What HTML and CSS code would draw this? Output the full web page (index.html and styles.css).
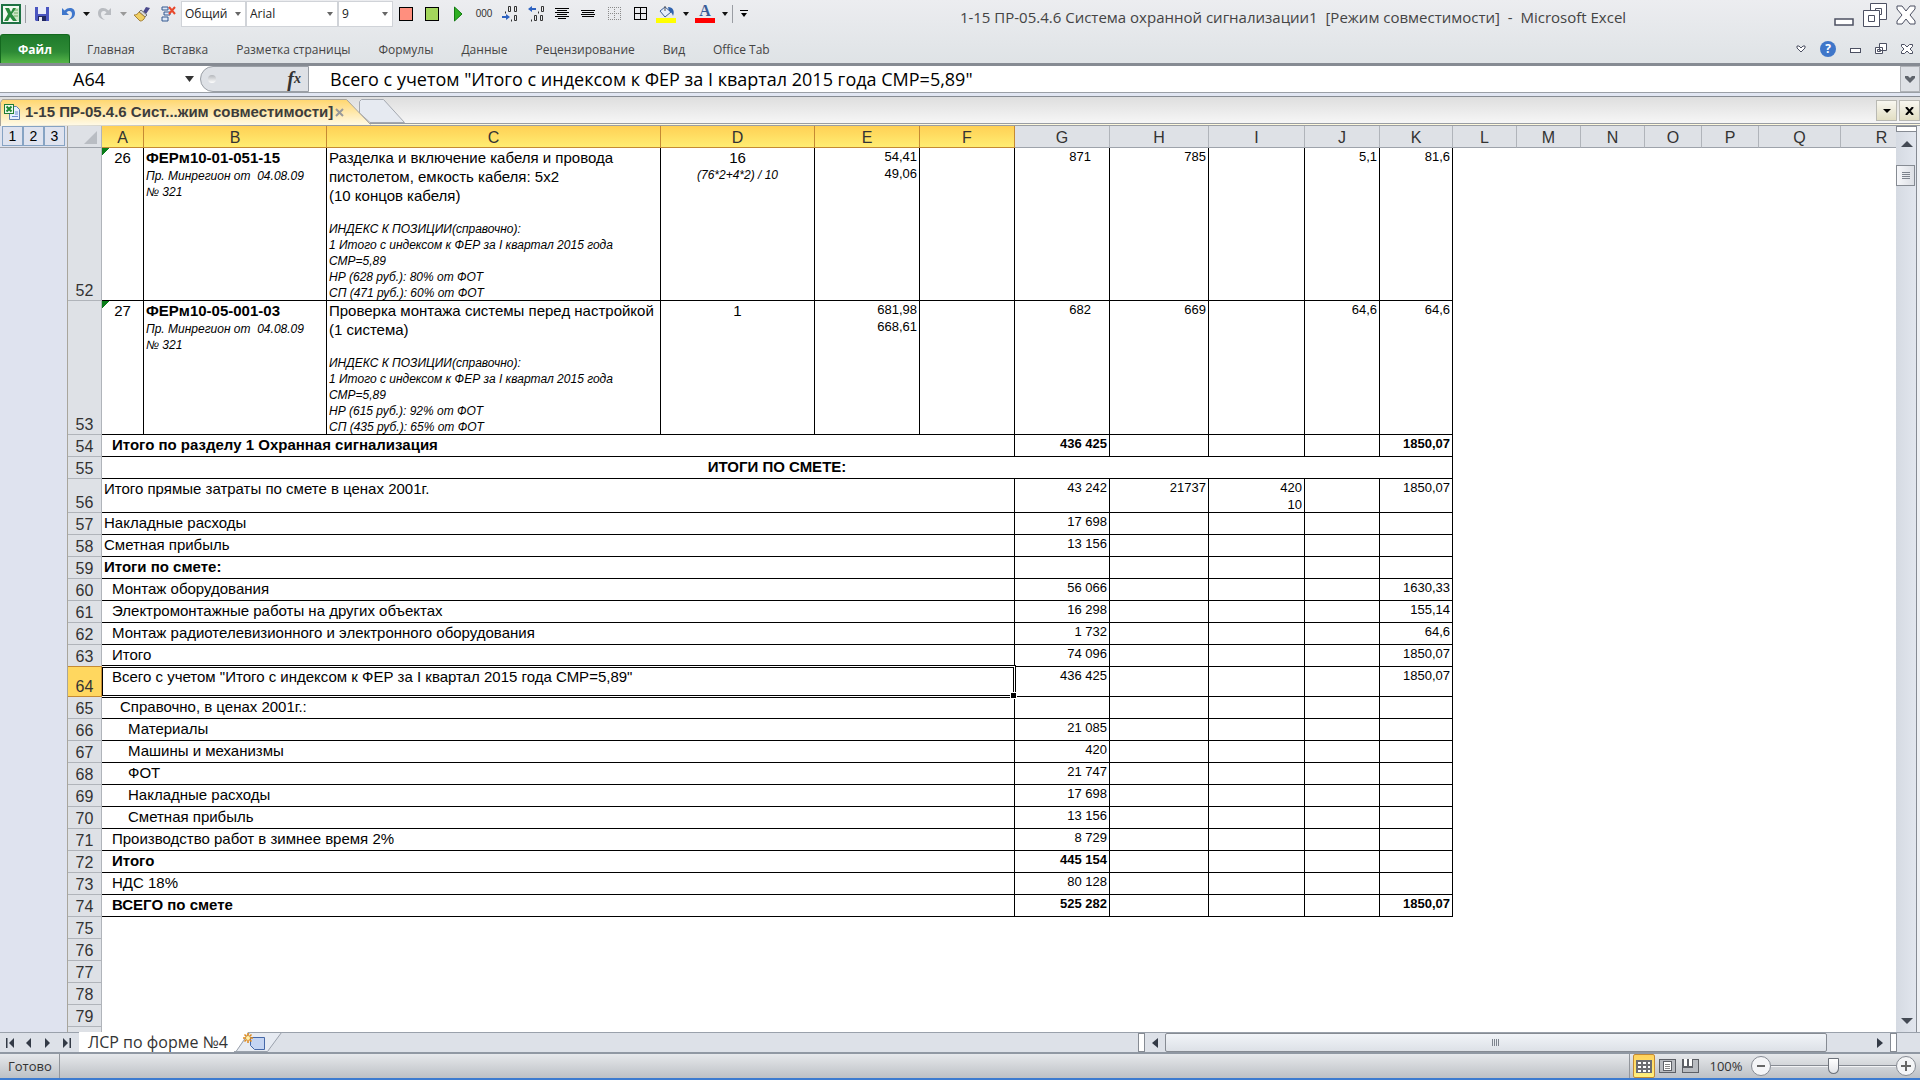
FILE: index.html
```html
<!DOCTYPE html>
<html lang="ru">
<head>
<meta charset="utf-8">
<title>1-15 ПР-05.4.6 Система охранной сигнализации1 - Microsoft Excel</title>
<link rel="stylesheet" href="styles.css">
</head>
<body>
<header class="ribbon">
  <div class="title-row">
    <div class="qat">
      <span class="app-icon"><svg width="20" height="20" viewBox="0 0 20 20"><rect x="1" y="1" width="18" height="18" fill="#f4faf3" stroke="#1f7244" stroke-width="2"/><path d="M12 4h6v13h-6z" fill="#cfe6c8"/><path d="M13 6h4M13 9h4M13 12h4" stroke="#6eae63"/><path d="M4 4h4l2 4 2-4h3l-4 6 5 7h-4l-3-4-2 4H3l4-7z" fill="#2a8a3e"/></svg></span>
      <span class="sep"></span>
      <button class="tool" aria-label="Сохранить"><svg width="16" height="16" viewBox="0 0 16 16"><path d="M1 1h14v14H2l-1-1z" fill="#4a55c0"/><rect x="4" y="1" width="8" height="7" fill="#e9ecf8"/><rect x="4" y="10" width="8" height="5" fill="#20275e"/><rect x="5" y="11" width="3" height="4" fill="#e8e8f0"/></svg></button>
      <button class="tool" aria-label="Отменить"><svg width="16" height="16" viewBox="0 0 16 16"><path d="M2 2v7h7L6.500 6.500C9 4 12 5 12 8c0 3-1.500 4.500-4 6 5-1 7-3.500 7-7 0-5-6-7-10.500-2.500z" fill="#3f77cc"/></svg></button>
      <button class="drop" aria-label="Список отмены"><svg width="7" height="4"><path d="M0 0h7L3.500 4z" fill="#111"/></svg></button>
      <button class="tool" aria-label="Вернуть"><svg width="16" height="16" viewBox="0 0 16 16"><path d="M14 2v7H7l2.500-2.500C7 4 4 5 4 8c0 3 1.500 4.500 4 6-5-1-7-3.500-7-7 0-5 6-7 10.500-2.500z" fill="#b9bcc1"/></svg></button>
      <button class="drop" aria-label="Список возврата"><svg width="7" height="4"><path d="M0 0h7L3.500 4z" fill="#999"/></svg></button>
      <button class="tool" aria-label="Формат по образцу"><svg width="17" height="16" viewBox="0 0 17 16"><path d="M12 1l4 1-4 6-3-2z" fill="#4b4a8c"/><path d="M7 4l6 5-2 2-6-5z" fill="#d8d8d8" stroke="#777"/><path d="M5 6l6 5c-1 3-3 4-5 4L0 9c2 0 4-1 5-3z" fill="#f0cf62" stroke="#a5813a"/></svg></button>
      <button class="tool" aria-label="Удалить строки"><svg width="17" height="16" viewBox="0 0 17 16"><path d="M2 1h6v3H2zM4 6h6v3H4zM2 11h6v4H2z" fill="#dce8f7" stroke="#35598f"/><path d="M9 1l6 7M15 1L9 8" stroke="#e8482c" stroke-width="2"/></svg></button>
      <label class="combo combo-format"><select aria-label="Числовой формат"><option>Общий</option></select><svg width="6" height="4"><path d="M0 0h6L3 4z" fill="#666"/></svg></label>
      <label class="combo combo-font"><select aria-label="Шрифт"><option>Arial</option></select><svg width="6" height="4"><path d="M0 0h6L3 4z" fill="#666"/></svg></label>
      <label class="combo combo-size"><select aria-label="Размер шрифта"><option>9</option></select><svg width="6" height="4"><path d="M0 0h6L3 4z" fill="#666"/></svg></label>
      <button class="tool" aria-label="Красная метка"><svg width="14" height="14"><rect x=".5" y=".5" width="13" height="13" fill="#ff8f7e" stroke="#000"/></svg></button>
      <button class="tool" aria-label="Зелёная метка"><svg width="14" height="14"><rect x=".5" y=".5" width="13" height="13" fill="#a3d65c" stroke="#000"/></svg></button>
      <button class="tool" aria-label="Выполнить"><svg width="8" height="16"><path d="M.5 1v14L8 8z" fill="#2eaf22" stroke="#127a10"/></svg></button>
      <button class="tool digits">000</button>
      <button class="tool" aria-label="Уменьшить разрядность"><svg width="17" height="18" viewBox="0 0 17 18"><g fill="none" stroke="#333"><path d="M3.500 6.500v2M6.500 1.500h2v5h-2zM12.500 1.500h2v5h-2zM9.500 14.500v2M12.500 10.500h2v5h-2z"/></g><path d="M0 11h4V9l4 3-4 3v-2H0z" fill="#2d62c0"/></svg></button>
      <button class="tool" aria-label="Увеличить разрядность"><svg width="17" height="18" viewBox="0 0 17 18"><g fill="none" stroke="#333"><path d="M10.500 6.500v2M13.500 1.500h2v5h-2zM3.500 14.500v2M6.500 10.500h2v5h-2zM12.500 10.500h2v5h-2z"/></g><path d="M8 3H4V1L0 4l4 3V5h4z" fill="#2d62c0"/></svg></button>
      <button class="tool" aria-label="По центру"><svg width="14" height="12"><path d="M0 .5h14M2 2.500h10M0 4.500h14M2 6.500h10M0 8.500h14M3 10.500h8" stroke="#000"/></svg></button>
      <button class="tool" aria-label="По середине"><svg width="14" height="8"><path d="M0 .5h14M1 2.500h12M0 4.500h14M1 6.500h12" stroke="#000"/></svg></button>
      <button class="tool" aria-label="Без границ"><svg width="13" height="13"><path d="M.5 0v13M6.500 0v13M12.500 0v13M0 .5h13M0 6.500h13M0 12.500h13" stroke="#8a8a8a" stroke-dasharray="1 1"/></svg></button>
      <button class="tool" aria-label="Все границы"><svg width="13" height="13"><path d="M.5 0v13M6.500 0v13M12.500 0v13M0 .5h13M0 6.500h13M0 12.500h13" stroke="#000"/></svg></button>
      <button class="tool" aria-label="Цвет заливки"><svg width="20" height="18" viewBox="0 0 20 18"><path d="M4 6l5-4 6 5-6 5z" fill="#e6eefb" stroke="#3d5f96"/><path d="M9 6V1" stroke="#555"/><path d="M12 2c5 0 7 4 5 9-1-3-2-4-4-5z" fill="#2f62ae"/><path d="M0 13h20v5H0z" fill="#ff0"/></svg></button>
      <button class="drop wide-drop" aria-label="Выбор заливки"><svg width="6" height="4"><path d="M0 0h6L3 4z" fill="#111"/></svg></button>
      <button class="tool fontcolor"><span>A</span></button>
      <button class="drop wide-drop" aria-label="Выбор цвета текста"><svg width="6" height="4"><path d="M0 0h6L3 4z" fill="#111"/></svg></button>
      <span class="sep"></span>
      <button class="tool more" aria-label="Настройка панели"><svg width="8" height="7"><path d="M0 .5h8" stroke="#000"/><path d="M1 3h6L4 7z"/></svg></button>
    </div>
    <h1 class="title">1-15 ПР-05.4.6 Система охранной сигнализации1&nbsp; [Режим совместимости]&nbsp; -&nbsp; Microsoft Excel</h1>
    <div class="window-buttons">
      <button aria-label="Свернуть"><svg width="20" height="26" viewBox="0 0 20 26"><rect x="1" y="17" width="18" height="6" fill="#fff" stroke="#4c5062" stroke-width="1.500"/></svg></button>
      <button aria-label="Восстановить"><svg width="26" height="26" viewBox="0 0 26 26"><g fill="#fff" stroke="#4c5062"><path d="M8.500 1.500h16v16h-16z"/><path d="M13.500 6.500h6v6h-6z"/><path d="M1.500 8.500h16v16h-16z"/><path d="M6.500 13.500h6v6h-6z"/></g></svg></button>
      <button aria-label="Закрыть"><svg width="20" height="20" viewBox="0 0 20 20"><path d="M1 1h5l4 5 4-5h5v3l-5 6 5 6v3h-5l-4-5-4 5H1v-3l5-6-5-6z" fill="#fff" stroke="#4c5062"/></svg></button>
    </div>
  </div>
  <nav class="tabs">
    <button class="file">Файл</button>
    <a href="#home">Главная</a><a href="#insert">Вставка</a><a href="#layout">Разметка страницы</a><a href="#formulas">Формулы</a><a href="#data">Данные</a><a href="#review">Рецензирование</a><a href="#view">Вид</a><a href="#officetab">Office Tab</a>
    <div class="book-buttons">
      <button aria-label="Свернуть ленту"><svg width="10" height="8" viewBox="0 0 10 8"><path d="M1 1h2l2 2 2-2h2v2L5 7 1 3z" fill="#fff" stroke="#4c5062"/></svg></button>
      <button class="help">?</button>
      <button aria-label="Свернуть книгу"><svg width="11" height="10"><rect x=".5" y="4.500" width="10" height="4" fill="#fff" stroke="#4c5062"/></svg></button>
      <button aria-label="Восстановить книгу"><svg width="12" height="12"><g fill="#fff" stroke="#4c5062"><path d="M4.500.5h7v7h-7zM.5 4.500h7v6h-7zM2.500 6.500h3v2h-3z"/></g></svg></button>
      <button aria-label="Закрыть книгу"><svg width="12" height="10" viewBox="0 0 12 10"><path d="M.5.5h3L6 3 8.500.5h3v2L9 5l2.500 2.500v2h-3L6 7 3.500 9.500h-3v-2L3 5 .5 2.500z" fill="#fff" stroke="#4c5062"/></svg></button>
    </div>
  </nav>
</header>

<div class="formula-bar">
  <input class="name-box" aria-label="Имя ячейки" value="A64">
  <button class="name-drop" aria-label="Список имён"><svg width="9" height="6"><path d="M0 0h9L4.500 6z" fill="#333"/></svg></button>
  <div class="fx"><i class="knob"></i><button class="fx-button"><b>f</b><span>x</span></button></div>
  <input class="formula" aria-label="Строка формул" value="Всего с учетом &quot;Итого с индексом к ФЕР за I квартал 2015 года СМР=5,89&quot;">
  <button class="expand" aria-label="Развернуть строку формул"><svg width="10" height="7"><path d="M0 0h3l2 2 2-2h3v2L5 7 0 2z" fill="#5f646c"/></svg></button>
</div>

<div class="doc-tabs">
  <div class="doc-tab">
    <svg class="doc-shape" width="372" height="27" viewBox="0 0 372 27"><defs><linearGradient id="tabfill" x1="0" y1="0" x2="0" y2="1"><stop offset="0" stop-color="#ffd66e"/><stop offset="1" stop-color="#fffbea"/></linearGradient></defs><path d="M.5 27V3.500l2-3H346.500L370.500 25.500" fill="url(#tabfill)" stroke="#a9a59b"/></svg>
    <svg class="doc-icon" width="16" height="16" viewBox="0 0 16 16"><path d="M5.500 2.500h7l3 3v10h-10z" fill="#e6efff" stroke="#5f7fb0"/><path d="M11 8h3M11 10h3M8 12.500h6" stroke="#6c8ed0"/><rect x=".5" y=".5" width="9" height="9" fill="#eef8ec" stroke="#1f7a35"/><path d="M2.500 2.500l5 5M7.500 2.500l-5 5" stroke="#1f8a35" stroke-width="2"/></svg>
    <span class="doc-name">1-15 ПР-05.4.6 Сист...жим совместимости]</span>
    <button class="doc-close" aria-label="Закрыть вкладку"><svg width="9" height="9"><path d="M1 1l7 7M8 1L1 8" stroke="#999" stroke-width="2"/></svg></button>
  </div>
  <button class="doc-new" aria-label="Новая вкладка"><svg width="46" height="24"><path d="M.5 14V2.500l2-2H24.500L45.500 23.500H11z" fill="#e6eaf1" stroke="#a4a8b0"/></svg></button>
  <div class="doc-buttons">
    <button aria-label="Список вкладок"><svg width="8" height="4"><path d="M0 0h8L4 4z"/></svg></button>
    <button aria-label="Закрыть"><svg width="9" height="8"><path d="M1 0l7 8M8 0L1 8" stroke="#000" stroke-width="2"/></svg></button>
  </div>
</div>

<main class="workspace">
  <aside class="outline">
    <div class="levels"><button>1</button><button>2</button><button>3</button></div>
  </aside>
  <div class="sheet">
    <table>
      <colgroup><col class="c-row"><col class="c-a"><col class="c-b"><col class="c-c"><col class="c-d"><col class="c-e"><col class="c-f"><col class="c-f"><col class="c-h"><col class="c-i"><col class="c-j"><col class="c-k"><col class="c-l"><col class="c-l"><col class="c-l"><col class="c-o"><col class="c-o"><col class="c-q"><col class="c-q"></colgroup>
      <thead><tr><th class="corner"><svg width="13" height="13"><path d="M13 0v13H0z" fill="#b9bdc3"/></svg></th><th class="on">A</th><th class="on">B</th><th class="on">C</th><th class="on">D</th><th class="on">E</th><th class="on">F</th><th>G</th><th>H</th><th>I</th><th>J</th><th>K</th><th>L</th><th>M</th><th>N</th><th>O</th><th>P</th><th>Q</th><th>R</th></tr></thead>
      <tbody>
        <tr class="pos"><th>52</th><td class="mid flag">26</td><td><b>ФЕРм10-01-051-15</b><p class="note law">Пр. Минрегион от&nbsp; 04.08.09<br>№ 321</p></td><td>Разделка и включение кабеля и провода<br>пистолетом, емкость кабеля: 5х2<br>(10 концов кабеля)<p class="note index">ИНДЕКС К ПОЗИЦИИ(справочно):<br>1 Итого с индексом к ФЕР за I квартал 2015 года<br>СМР=5,89<br>НР (628 руб.): 80% от ФОТ<br>СП (471 руб.): 60% от ФОТ</p></td><td class="mid">16<p class="note">(76*2+4*2) / 10</p></td><td class="num">54,41<br>49,06</td><td></td><td class="num wide">871</td><td class="num">785</td><td></td><td class="num">5,1</td><td class="num">81,6</td></tr>
        <tr class="pos"><th>53</th><td class="mid flag">27</td><td><b>ФЕРм10-05-001-03</b><p class="note law">Пр. Минрегион от&nbsp; 04.08.09<br>№ 321</p></td><td>Проверка монтажа системы перед настройкой<br>(1 система)<p class="note index">ИНДЕКС К ПОЗИЦИИ(справочно):<br>1 Итого с индексом к ФЕР за I квартал 2015 года<br>СМР=5,89<br>НР (615 руб.): 92% от ФОТ<br>СП (435 руб.): 65% от ФОТ</p></td><td class="mid">1</td><td class="num">681,98<br>668,61</td><td></td><td class="num wide">682</td><td class="num">669</td><td></td><td class="num">64,6</td><td class="num">64,6</td></tr>
        <tr class="bold"><th>54</th><td colspan="6" class="in1">Итого по разделу 1 Охранная сигнализация</td><td class="num">436 425</td><td></td><td></td><td></td><td class="num">1850,07</td></tr>
        <tr class="bold"><th>55</th><td colspan="11" class="mid">ИТОГИ ПО СМЕТЕ:</td></tr>
        <tr class="double"><th>56</th><td colspan="6">Итого прямые затраты по смете в ценах 2001г.</td><td class="num">43 242</td><td class="num">21737</td><td class="num"><p class="pair">420<br>10</p></td><td></td><td class="num">1850,07</td></tr>
        <tr><th>57</th><td colspan="6">Накладные расходы</td><td class="num">17 698</td><td></td><td></td><td></td><td></td></tr>
        <tr><th>58</th><td colspan="6">Сметная прибыль</td><td class="num">13 156</td><td></td><td></td><td></td><td></td></tr>
        <tr class="bold"><th>59</th><td colspan="6">Итоги по смете:</td><td></td><td></td><td></td><td></td><td></td></tr>
        <tr><th>60</th><td colspan="6" class="in1">Монтаж оборудования</td><td class="num">56 066</td><td></td><td></td><td></td><td class="num">1630,33</td></tr>
        <tr><th>61</th><td colspan="6" class="in1">Электромонтажные работы на других объектах</td><td class="num">16 298</td><td></td><td></td><td></td><td class="num">155,14</td></tr>
        <tr><th>62</th><td colspan="6" class="in1">Монтаж радиотелевизионного и электронного оборудования</td><td class="num">1 732</td><td></td><td></td><td></td><td class="num">64,6</td></tr>
        <tr><th>63</th><td colspan="6" class="in1">Итого</td><td class="num">74 096</td><td></td><td></td><td></td><td class="num">1850,07</td></tr>
        <tr class="current"><th class="on">64</th><td colspan="6" class="in1 selected">Всего с учетом "Итого с индексом к ФЕР за I квартал 2015 года СМР=5,89"</td><td class="num">436 425</td><td></td><td></td><td></td><td class="num">1850,07</td></tr>
        <tr><th>65</th><td colspan="6" class="in2">Справочно, в ценах 2001г.:</td><td></td><td></td><td></td><td></td><td></td></tr>
        <tr><th>66</th><td colspan="6" class="in3">Материалы</td><td class="num">21 085</td><td></td><td></td><td></td><td></td></tr>
        <tr><th>67</th><td colspan="6" class="in3">Машины и механизмы</td><td class="num">420</td><td></td><td></td><td></td><td></td></tr>
        <tr><th>68</th><td colspan="6" class="in3">ФОТ</td><td class="num">21 747</td><td></td><td></td><td></td><td></td></tr>
        <tr><th>69</th><td colspan="6" class="in3">Накладные расходы</td><td class="num">17 698</td><td></td><td></td><td></td><td></td></tr>
        <tr><th>70</th><td colspan="6" class="in3">Сметная прибыль</td><td class="num">13 156</td><td></td><td></td><td></td><td></td></tr>
        <tr><th>71</th><td colspan="6" class="in1">Производство работ в зимнее время 2%</td><td class="num">8 729</td><td></td><td></td><td></td><td></td></tr>
        <tr class="bold"><th>72</th><td colspan="6" class="in1">Итого</td><td class="num">445 154</td><td></td><td></td><td></td><td></td></tr>
        <tr><th>73</th><td colspan="6" class="in1">НДС 18%</td><td class="num">80 128</td><td></td><td></td><td></td><td></td></tr>
        <tr class="bold"><th>74</th><td colspan="6" class="in1">ВСЕГО по смете</td><td class="num">525 282</td><td></td><td></td><td></td><td class="num">1850,07</td></tr>
        <tr><th>75</th></tr><tr><th>76</th></tr><tr><th>77</th></tr><tr><th>78</th></tr><tr><th>79</th></tr><tr><th></th></tr>
      </tbody>
    </table>
  </div>
  <div class="vscroll">
    <i class="split"></i>
    <button aria-label="Вверх"><svg width="12" height="6"><path d="M6 0l6 6H0z" fill="#444a54"/></svg></button>
    <div class="vtrack"><div class="vthumb"><svg width="8" height="8"><path d="M0 .5h8M0 2.500h8M0 4.500h8M0 6.500h8" stroke="#7d838d"/></svg></div></div>
    <button aria-label="Вниз"><svg width="12" height="6"><path d="M0 0h12L6 6z" fill="#444a54"/></svg></button>
  </div>
</main>

<div class="sheet-bar">
  <div class="sheet-nav">
    <button aria-label="Первый лист"><svg width="8" height="10"><path d="M.5 0v10" stroke="#333a46" stroke-width="2"/><path d="M8 0v10L3 5z" fill="#333a46"/></svg></button>
    <button aria-label="Предыдущий лист"><svg width="5" height="10"><path d="M5 0v10L0 5z" fill="#333a46"/></svg></button>
    <button aria-label="Следующий лист"><svg width="5" height="10"><path d="M0 0v10l5-5z" fill="#333a46"/></svg></button>
    <button aria-label="Последний лист"><svg width="8" height="10"><path d="M7.500 0v10" stroke="#333a46" stroke-width="2"/><path d="M0 0v10l5-5z" fill="#333a46"/></svg></button>
  </div>
  <button class="sheet-tab">ЛСР по форме №4</button>
  <button class="sheet-new" aria-label="Новый лист"><svg width="48" height="20" viewBox="0 0 48 20"><path d="M0 0h14L2 19.500H0z" fill="#fff"/><path d="M0 19.500h2l12-17 2-2h31.500l-14 19z" fill="#e7ebf2" stroke="#9aa1ab"/><path d="M16.500 5.500h14v12h-10l-4-4z" fill="#c4d4f2" stroke="#4668a8"/><path d="M14 1v10M9 6h10M10.500 2.500l7 7M17.500 2.500l-7 7" stroke="#e08a1c" stroke-width="1.500"/><circle cx="14" cy="6" r="2" fill="#fff3b0"/></svg></button>
  <div class="hscroll">
    <i class="hsplit"></i>
    <button aria-label="Влево"><svg width="6" height="10"><path d="M6 0v10L0 5z" fill="#333a46"/></svg></button>
    <div class="htrack"><div class="hthumb"><svg width="8" height="7"><path d="M.5 0v7M2.500 0v7M4.500 0v7M6.500 0v7" stroke="#7d838d"/></svg></div></div>
    <button aria-label="Вправо"><svg width="6" height="10"><path d="M0 0v10l6-5z" fill="#333a46"/></svg></button>
    <i class="hsplit"></i>
  </div>
</div>

<footer class="status">
  <span class="ready">Готово</span>
  <div class="views">
    <button class="view on" aria-label="Обычный"><svg width="16" height="13"><rect width="16" height="13" fill="#6b6c70"/><path d="M2 2h3v2H2zM7 2h3v2H7zM12 2h2v2h-2zM2 6h3v2H2zM7 6h3v2H7zM12 6h2v2h-2zM2 10h3v2H2zM7 10h3v2H7zM12 10h2v2h-2z" fill="#fff"/></svg></button>
    <button class="view" aria-label="Разметка страницы"><svg width="17" height="14"><rect x=".5" y=".5" width="16" height="13" fill="#b9bcc1" stroke="#5d6066"/><rect x="4.500" y="2.500" width="8" height="9" fill="#fff" stroke="#5d6066"/><path d="M6 5.500h5M6 7.500h5M6 9.500h5" stroke="#888"/></svg></button>
    <button class="view" aria-label="Страничный режим"><svg width="17" height="14"><rect x=".5" y=".5" width="16" height="13" fill="#b9bcc1" stroke="#5d6066"/><path d="M1 0h10v9H1z" fill="#5d6066"/><path d="M2 0h3v7H2zM7 0h3v7H7z" fill="#fff"/></svg></button>
  </div>
  <button class="percent">100%</button>
  <button class="round" aria-label="Уменьшить"><svg width="20" height="20"><circle cx="10" cy="10" r="9.500" fill="#f4f5f7" stroke="#868b93"/><path d="M6 10h8" stroke="#666" stroke-width="2"/></svg></button>
  <input class="zoom" type="range" min="0" max="100" value="50" aria-label="Масштаб">
  <button class="round" aria-label="Увеличить"><svg width="20" height="20"><circle cx="10" cy="10" r="9.500" fill="#f4f5f7" stroke="#868b93"/><path d="M5 10h10M10 5v10" stroke="#666" stroke-width="2"/></svg></button>
</footer>
</body>
</html>
```
FILE: styles.css
```css
* { box-sizing: border-box; }

body {
  margin: 0;
  height: 100vh;
  display: flex;
  flex-direction: column;
  overflow: hidden;
  background: #fff;
  color: #000;
  font-family: "Open Sans", "Noto Sans", sans-serif;
  font-size: 12px;
}

button {
  display: flex;
  align-items: center;
  justify-content: center;
  margin: 0;
  padding: 0;
  border: 0;
  background: none;
  color: inherit;
  font: inherit;
}

svg { display: block; flex: none; }
p { margin: 0; }

/* Ribbon */
.ribbon {
  flex: none;
  background: linear-gradient(#ecedf0, #dfe3e6);
  border-bottom: 3px solid #868b93;
}
.title-row { display: flex; height: 34px; }
.qat { display: flex; align-items: center; height: 27px; }
.app-icon { width: 24px; padding-left: 1px; }
.sep { width: 1px; height: 18px; margin: 0 3px 0 1px; background: #9a9da3; }
.tool { width: 26px; height: 24px; }
.drop { width: 11px; height: 24px; }
.wide-drop { width: 13px; }
.digits { color: #333; font-family: "Liberation Sans", sans-serif; font-size: 10px; }
.more { width: 16px; }
.fontcolor span {
  width: 20px;
  border-bottom: 5px solid #f00;
  color: #3a5c98;
  font: bold 16px/14px "Liberation Serif", serif;
  text-align: center;
}
.combo {
  display: flex;
  align-items: center;
  height: 26px;
  border: 1px solid #d0d3d8;
  background: #fff;
  padding-right: 4px;
}
.combo select {
  flex: 1;
  min-width: 0;
  appearance: none;
  border: 0;
  padding: 0 0 0 3px;
  background: none;
  color: #222;
  font: 12px/20px "Open Sans", "Noto Sans", sans-serif;
}
.combo-format { width: 65px; }
.combo-font { width: 92px; }
.combo-size { width: 55px; }
.title {
  flex: 1;
  margin: 0;
  color: #444;
  font-size: 15px;
  font-weight: 400;
  line-height: 34px;
  text-align: center;
  white-space: nowrap;
}
.window-buttons { display: flex; align-items: center; gap: 8px; height: 30px; padding-right: 4px; }

.tabs { display: flex; align-items: stretch; height: 29px; color: #444; }
.file {
  width: 70px;
  margin-right: 3px;
  border: 1px solid #14691f;
  border-bottom: 0;
  border-radius: 3px 3px 0 0;
  background: linear-gradient(#1f7a2b, #2d8a35 60%, #55b548);
  color: #fff;
  font-weight: 700;
}
.tabs a { padding: 0 14px; color: inherit; line-height: 32px; text-decoration: none; }
.book-buttons { display: flex; align-items: center; gap: 14px; margin-left: auto; padding-right: 7px; }
.help {
  width: 16px;
  height: 16px;
  border-radius: 8px;
  background: #3f76c9;
  color: #fff;
  font-weight: 700;
}

/* Formula bar */
.formula-bar {
  display: flex;
  flex: none;
  height: 31px;
  border-bottom: 1px solid #868b93;
  background: linear-gradient(#fff 26px, #9a9fa6 26px, #9a9fa6 27px, #e1e6f2 27px);
  padding-bottom: 4px;
}
.name-box, .formula {
  min-width: 0;
  border: 0;
  padding: 0;
  background: transparent;
  color: #000;
  font: 18px/26px "Open Sans", "Noto Sans", sans-serif;
}
.name-box { width: 178px; text-align: center; }
.name-drop { width: 22px; }
.fx {
  display: flex;
  align-items: center;
  justify-content: space-between;
  width: 109px;
  padding: 0 7px;
  border: 1px solid #9a9fa6;
  border-radius: 13px 0 0 13px;
  background: #dee1e6;
}
.knob { width: 8px; height: 8px; border-radius: 4px; background: linear-gradient(#b4b7bc, #fff); }
.fx-button { font: italic 20px/24px "Liberation Serif", serif; color: #333; }
.fx-button span { font-size: 14px; font-weight: 700; }
.formula { flex: 1; padding-left: 21px; }
.expand { width: 20px; border: 1px solid #b0b3b8; background: #dee1e6; }

/* Document tabs */
.doc-tabs {
  display: flex;
  flex: none;
  height: 29px;
  padding-top: 2px;
  background: linear-gradient(#dedede, #f6f6f6 26px, #999da3 26px, #999da3 27px, #fdf8dc 27px, #fdf8dc 28px, #999da3 28px);
}
.doc-tab { position: relative; display: flex; align-items: center; width: 359px; height: 26px; padding-left: 4px; }
.doc-shape { position: absolute; left: 0; top: 0; }
.doc-icon, .doc-name, .doc-close { position: relative; }
.doc-name { margin: 0 2px 0 5px; color: #3c3c3c; font: bold 15px/24px "Liberation Sans", sans-serif; }
.doc-new { height: 24px; }
.doc-buttons { display: flex; gap: 2px; height: 21px; margin: 1px 0 0 auto; }
.doc-buttons button { width: 21px; border: 1px solid #b9b9b3; background: linear-gradient(#f8f7f0, #e2dec3); }

/* Worksheet */
.workspace { display: flex; flex: 1; min-height: 0; }
.outline { flex: none; width: 68px; border-right: 1px solid #a8a59c; background: #dfe3ef; }
.levels { display: flex; height: 22px; padding: 0 2px 1px; border-bottom: 1px solid #a0a4ab; }
.levels button { width: 21px; border: 1px solid #86a3c3; font: 14px/20px "Liberation Sans", sans-serif; }
.sheet { flex: 1; min-width: 0; overflow: hidden; }

table {
  width: 0;
  table-layout: fixed;
  border-collapse: separate;
  border-spacing: 0;
  font: 15px/19px "Liberation Sans", Arial, sans-serif;
}
.c-row { width: 34px; }
.c-a { width: 42px; }
.c-b { width: 183px; }
.c-c { width: 334px; }
.c-d { width: 154px; }
.c-e { width: 105px; }
.c-f { width: 95px; }
.c-h { width: 99px; }
.c-i { width: 96px; }
.c-j { width: 75px; }
.c-k { width: 73px; }
.c-l { width: 64px; }
.c-o { width: 57px; }
.c-q { width: 82px; }

th {
  height: 22px;
  padding: 0;
  border-right: 1px solid #b0b4ba;
  border-bottom: 1px solid #b0b4ba;
  background: #dee1e6;
  color: #333;
  font-size: 16px;
  font-weight: 400;
  line-height: 18px;
  vertical-align: bottom;
}
thead th { border-bottom-color: #9ea3ab; }
th.on { background: linear-gradient(#ffd055, #ffed72); border-color: #c58a33; }
tbody th.on { background: #ffd75f; box-shadow: 0 -1px #c58a33; }
.corner svg { margin: 0 4px 3px auto; }

td {
  padding: 0 2px;
  border-right: 1px solid #000;
  border-bottom: 1px solid #000;
  vertical-align: top;
  white-space: nowrap;
}
.pos th { height: 134px; }
.double th { height: 34px; }
.current th { height: 30px; }
.bold td { font-weight: 700; }
.mid { text-align: center; }
.num { font-size: 13px; line-height: 17px; text-align: right; }
.num.wide { padding-right: 18px; }
.in1 { padding-left: 10px; }
.in2 { padding-left: 18px; }
.in3 { padding-left: 26px; }
.pair { margin-bottom: -1px; }
.note { font-size: 12px; font-style: italic; line-height: 16px; }
.law { margin-top: 1px; }
.index { margin: 16px 0 -1px; }
.flag { background: linear-gradient(135deg, #0a7d1a 5px, transparent 5px); }

.selected { position: relative; }
.selected::before {
  content: "";
  position: absolute;
  inset: 0;
  border: 1px solid #000;
  box-shadow: 0 0 0 1px #fff, 0 0 0 2px #000;
  clip-path: inset(-2px -2px -2px 0);
}
.selected::after {
  content: "";
  position: absolute;
  right: -3px;
  bottom: -3px;
  width: 5px;
  height: 5px;
  border: 1px solid #fff;
  background: #000;
}

/* Vertical scroll bar */
.vscroll {
  display: flex;
  flex: none;
  flex-direction: column;
  width: 24px;
  padding-right: 3px;
  background: linear-gradient(90deg, #d5dae2, #e2e6ee 20px, #868b93 20px, #868b93 21px, #eef0f4 21px);
}
.split { height: 6px; border: 1px solid #868b93; background: #fff; }
.vscroll button { height: 23px; }
.vtrack { flex: 1; padding-top: 10px; }
.vthumb {
  display: flex;
  align-items: center;
  justify-content: center;
  width: 19px;
  height: 21px;
  border: 1px solid #868b93;
  background: linear-gradient(90deg, #f6f7fa, #dcdfe5);
}

/* Sheet tabs and horizontal scroll bar */
.sheet-bar {
  display: flex;
  flex: none;
  height: 22px;
  border-top: 1px solid #9aa1ab;
  border-bottom: 2px solid #9098a3;
  background: #dde1e8;
}
.sheet-nav { display: flex; width: 79px; }
.sheet-nav button { width: 19px; }
.sheet-tab { padding: 0 6px 0 9px; margin-top: -1px; background: #fff; color: #333; font-size: 16px; line-height: 20px; }
.sheet-new { margin-top: -1px; }
.hscroll { display: flex; width: 759px; margin: 0 23px 0 auto; }
.hsplit { width: 7px; border: 1px solid #868b93; background: #fff; }
.hscroll button { width: 20px; }
.htrack { flex: 1; padding-right: 43px; }
.hthumb {
  display: flex;
  align-items: center;
  justify-content: center;
  height: 19px;
  border: 1px solid #868b93;
  border-radius: 2px;
  background: linear-gradient(#f1f4f8, #dde1e7);
}

/* Status bar */
.status {
  display: flex;
  align-items: center;
  flex: none;
  height: 26px;
  padding-right: 4px;
  border-bottom: 2px solid #3c7bd0;
  background: linear-gradient(#e6e8eb, #bdc1c6);
  color: #333;
  font-size: 13px;
}
.ready { width: 60px; padding-left: 8px; border-right: 1px solid #92969c; line-height: 24px; }
.views { display: flex; gap: 1px; margin-left: auto; padding-left: 3px; border-left: 1px solid #92969c; }
.view { width: 22px; height: 24px; }
.view.on { border: 1px solid #c58a33; border-radius: 2px; background: linear-gradient(#ffd25c, #fff07e); }
.percent { width: 50px; }
.round { width: 20px; }
.zoom { width: 125px; height: 20px; margin: 0; appearance: none; background: linear-gradient(transparent 9px, #868b93 9px, #868b93 10px, #f2f3f5 10px, #f2f3f5 11px, transparent 11px); }
.zoom::-webkit-slider-thumb {
  appearance: none;
  width: 11px;
  height: 16px;
  background: linear-gradient(#fff, #e2e4e8) padding-box;
  border: 1px solid #6d727a;
  border-radius: 1px 1px 6px 6px;
}
```
